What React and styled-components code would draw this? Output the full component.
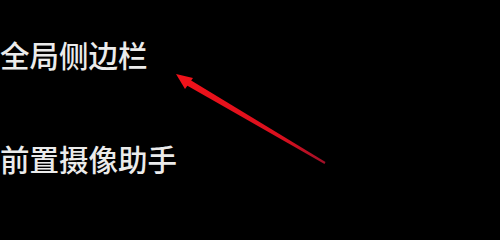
import React from "react";
import styled, { createGlobalStyle } from "styled-components";

const Global = createGlobalStyle`
  html, body { margin: 0; padding: 0; background: #000; }
  body { width: 500px; height: 219px; overflow: hidden; }
`;

const Page = styled.div`
  position: relative;
  width: 500px;
  height: 219px;
  background: #000;
  display: flex;
  flex-direction: column;
  padding-top: 40px;
  box-sizing: border-box;
  gap: 75px;
`;

const Item = styled.div`
  font-family: "Noto Sans CJK SC", "Noto Sans", sans-serif;
  font-size: 29.5px;
  font-weight: 500;
  line-height: 29px;
  color: #ebebeb;
  white-space: nowrap;
  letter-spacing: 0;
`;

const Overlay = styled.svg`
  position: absolute;
  left: 0;
  top: 0;
  pointer-events: none;
`;

export default function App() {
  return (
    <>
      <Global />
      <Page>
        <Item>全局侧边栏</Item>
        <Item>前置摄像助手</Item>
        <Overlay width="500" height="219" viewBox="0 0 500 219">
          <defs>
            <linearGradient id="shaft" x1="184" y1="80" x2="325" y2="163" gradientUnits="userSpaceOnUse">
              <stop offset="0" stopColor="#f0121a" />
              <stop offset="0.7" stopColor="#d8101e" />
              <stop offset="1" stopColor="#a01028" />
            </linearGradient>
          </defs>
          <polygon points="176,74 193,78 185,89" fill="#f0121a" />
          <polygon
            points="185.8,77.2 182.2,82.8 324.5,163.9 325.5,162.1"
            fill="url(#shaft)"
          />
        </Overlay>
      </Page>
    </>
  );
}
